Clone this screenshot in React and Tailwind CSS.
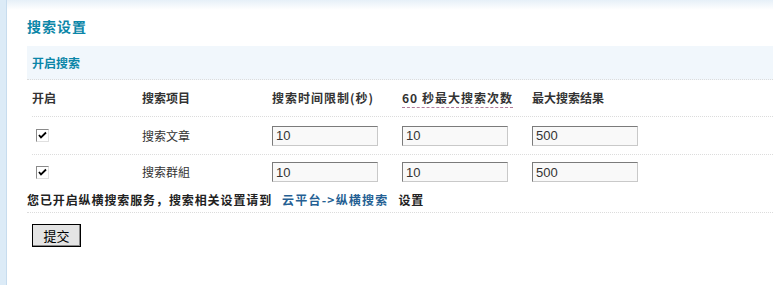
import React from "react";

const font = { fontFamily: '"Noto Sans CJK SC", "Liberation Sans", sans-serif' };

function Input({ value }) {
  return (
    <input
      readOnly
      value={value}
      className="w-[106px] h-[20px] bg-[#f9f9f9] border border-t-[#7b7b7b] border-l-[#7b7b7b] border-r-[#c9c9c9] border-b-[#c9c9c9] px-[3px] text-[13px] text-[#333] outline-none"
      style={{ fontFamily: '"Liberation Sans", Arial, sans-serif' }}
    />
  );
}

function Check() {
  return (
    <span className="w-[13px] h-[13px] border border-t-[#8a8a8a] border-l-[#8a8a8a] border-r-[#e0e0e0] border-b-[#e0e0e0] bg-white flex items-center justify-center">
      <svg width="9" height="9" viewBox="0 0 9 9">
        <path d="M1 4 L3 6.5 L8 1.5" stroke="#000" strokeWidth="1.8" fill="none" />
      </svg>
    </span>
  );
}

function Row({ name, a, b, c, last }) {
  return (
    <div className={"flex items-center text-[12px] text-[#333] " + (last ? "h-[34px]" : "h-[38px] border-b border-dotted border-[#dcdcdc]")}>
      <div className="w-[110px] pl-[4px] flex items-center"><Check /></div>
      <div className="w-[130px]">{name}</div>
      <div className="w-[130px]"><Input value={a} /></div>
      <div className="w-[130px]"><Input value={b} /></div>
      <div className="w-[130px]"><Input value={c} /></div>
    </div>
  );
}

export default function App() {
  return (
    <div className="w-[773px] h-[285px] flex bg-white overflow-hidden" style={font}>
      <div className="w-[7px] bg-[#dcebf7] border-r border-[#c7dcee]" />
      <div className="flex-1 flex flex-col">
        <div className="h-[10px] bg-gradient-to-b from-[#e6f0f8] to-white" />
        <div className="pl-[20px] flex flex-col">
          <div className="h-[36px] flex items-start pt-[6px] text-[14px] tracking-[1px] font-bold text-[#0b86a8]">搜索设置</div>
          <div className="h-[34px] bg-[#f1f7fc] flex items-center pl-[5px] text-[12px] font-bold text-[#0b86a8] border-b border-dotted border-[#dcdcdc]">开启搜索</div>
          <div className="pl-[5px] flex flex-col">
            <div className="flex items-center h-[37px] border-b border-dotted border-[#dcdcdc] text-[12px] font-bold text-[#333]">
              <div className="w-[110px]">开启</div>
              <div className="w-[130px]">搜索项目</div>
              <div className="w-[130px] tracking-[1px]">搜索时间限制(秒)</div>
              <div className="w-[130px] tracking-[1px]">
                <span className="border-b border-dashed border-[#b07a9a] pb-[1px]">60 秒最大搜索次数</span>
              </div>
              <div className="w-[130px]">最大搜索结果</div>
            </div>
            <Row name="搜索文章" a="10" b="10" c="500" />
            <Row name="搜索群組" a="10" b="10" c="500" last />
          </div>
          <div className="h-[26px] flex items-center text-[12px] font-bold text-[#222] tracking-[0.9px] border-b border-dotted border-[#dcdcdc] -mt-[2px]">
            您已开启纵横搜索服务，搜索相关设置请到
            <span className="text-[#255f93] mx-[10px] tracking-[1.2px]">云平台-&gt;纵横搜索</span>
            设置
          </div>
          <div className="pl-[5px] pt-[9px]">
            <button className="w-[49px] h-[23px] bg-[#e4e4e4] border border-[#222] border-t-[#f0f0f0] border-l-[#f0f0f0] shadow-[inset_-1px_-1px_0_#888] text-[13px] text-black outline outline-1 outline-[#000] -outline-offset-1">提交</button>
          </div>
        </div>
      </div>
    </div>
  );
}
